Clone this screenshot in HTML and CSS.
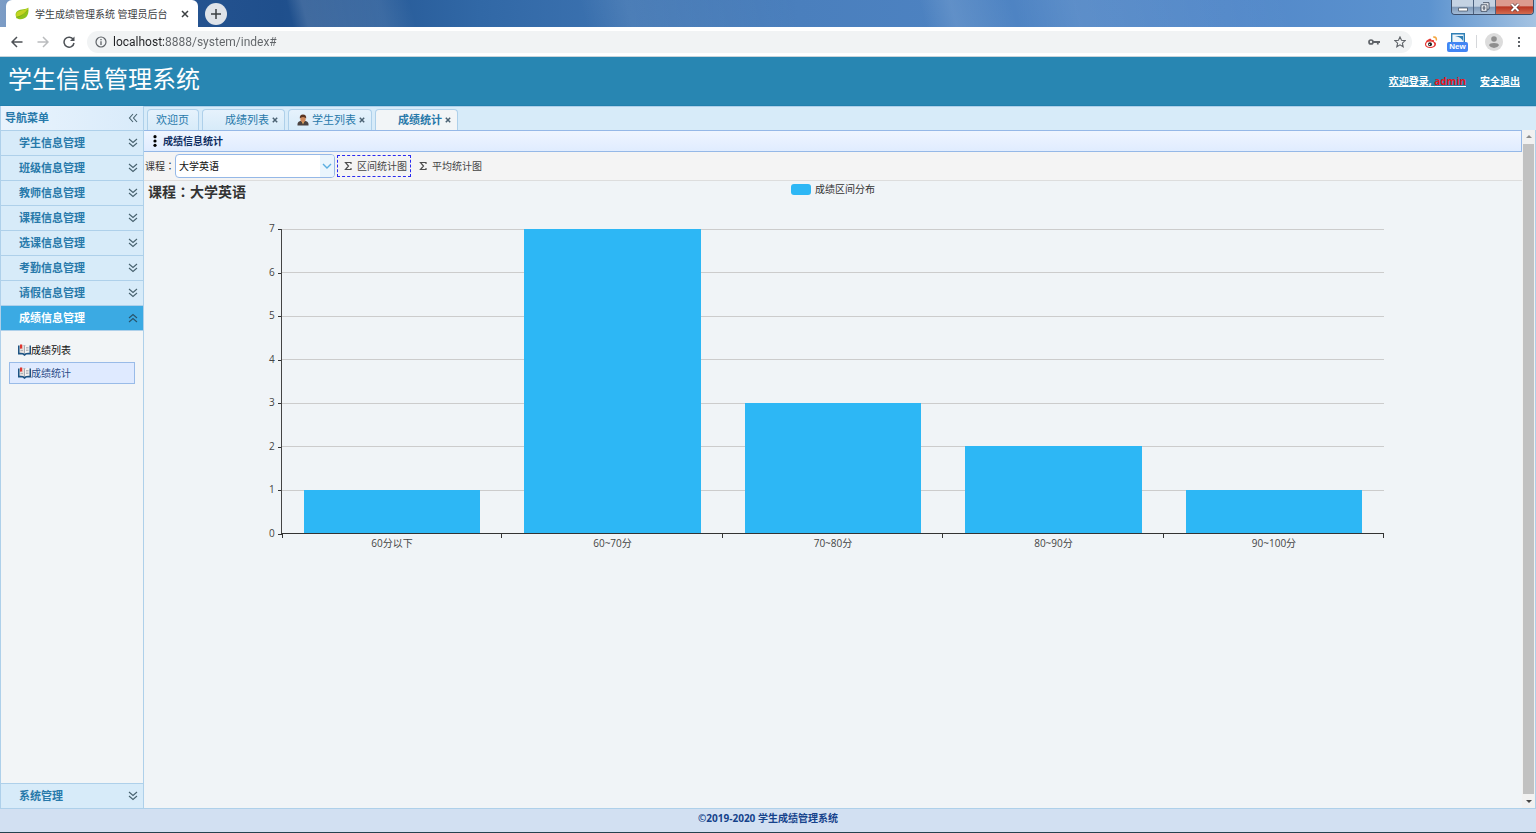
FILE: index.html
```html
<!DOCTYPE html>
<html lang="zh-CN">
<head>
<meta charset="utf-8">
<title>学生成绩管理系统 管理员后台</title>
<link rel="stylesheet" href="styles.css">
</head>
<body>
<svg class="defs" aria-hidden="true">
  <symbol id="i-down" viewBox="0 0 10 10"><path d="M1 1l4 3.500L9 1M1 5l4 3.500L9 5" fill="none" stroke="#47616e" stroke-width="1.100"/></symbol>
  <symbol id="i-up" viewBox="0 0 10 10"><path d="M1 5l4-3.500L9 5M1 9l4-3.500L9 9" fill="none" stroke="#29546b" stroke-width="1.100"/></symbol>
  <symbol id="i-left" viewBox="0 0 10 10"><path d="M5 1L1.500 5 5 9M9 1L5.500 5 9 9" fill="none" stroke="#47616e" stroke-width="1.100"/></symbol>
  <symbol id="i-book" viewBox="0 0 13 12"><path d="M0 1.500h13v9H8.500L6.500 12l-2-1.500H0z" fill="#1d5484"/><path d="M1.500 1Q4.500.5 6.500 1.800V9.600Q4.500 8.500 1.500 8.800z" fill="#e4e0dd"/><path d="M11.500 1Q8.500.5 6.500 1.800V9.600Q8.500 8.500 11.500 8.800z" fill="#f4f2f0"/><path d="M2 .500h2.200V5L3.100 4.200 2 5z" fill="#e0352f"/><path d="M6.500 2v8M8 3.500h2.500M8 5h2.500M8 6.500h2.500M2.500 6.500H5" stroke="#9a9fa8" stroke-width=".7"/></symbol>
  <symbol id="i-x" viewBox="0 0 6 6"><path d="M.8.8l4.400 4.400M5.200.8L.8 5.200" stroke="#4b6273" stroke-width="1.500"/></symbol>
  <symbol id="i-sum" viewBox="0 0 8 10"><path d="M7 3V1.500H1.500L4.500 5 1.500 8.500H7V7" fill="none" stroke="#4c4c4c" stroke-width="1.200"/></symbol>
</svg>

<div class="titlebar">
  <div class="browser-tab">
    <svg class="leaf" viewBox="0 0 14 13"><path d="M13.300.5C11 2.800 6 1.500 2.500 4 0 6 .3 9 1.500 10.800 4 13.200 9 12.600 11.500 9.800 13.500 7.500 13.800 3.500 13.300.5z" fill="#8fc31a"/><path d="M1.500 6C4 3 9 4 13 1 12 6 8 9 1 9.500z" fill="#c3d422"/><path d="M1 11C5 9 9 8 12.500 3" fill="none" stroke="#6d9e13" stroke-width=".6"/></svg>
    <span class="browser-title">学生成绩管理系统 管理员后台</span>
    <button class="plain" aria-label="关闭标签页"><svg width="8" height="8" viewBox="0 0 8 8"><path d="M1 1l6 6M7 1L1 7" stroke="#3c4043" stroke-width="1.500"/></svg></button>
  </div>
  <button class="new-tab" aria-label="新标签页"><svg width="10" height="10" viewBox="0 0 10 10"><path d="M5 0v10M0 5h10" stroke="#3c4043" stroke-width="1.500"/></svg></button>
  <div class="window-buttons">
    <button class="win-btn" aria-label="最小化"><svg width="10" height="9" viewBox="0 0 10 9"><path d="M.5 5h9v3h-9z" fill="#fff" stroke="#4a5568" stroke-width=".8"/></svg></button>
    <button class="win-btn" aria-label="还原"><svg width="10" height="10" viewBox="0 0 10 10"><path d="M3 .7h6v6.500H7.500M1 2.800h6v6.500H1zM3.200 4.800h1.600v2.400H3.200z" fill="#f4f6f8" stroke="#3f4b5e" stroke-width=".9"/></svg></button>
    <button class="win-btn win-close" aria-label="关闭"><svg width="10" height="9" viewBox="0 0 10 9"><path d="M1.500 1l7 7M8.500 1l-7 7" stroke="#5d3030" stroke-width="3.200"/><path d="M1.500 1l7 7M8.500 1l-7 7" stroke="#fff" stroke-width="2"/></svg></button>
  </div>
</div>

<div class="navbar">
  <button class="plain" aria-label="后退"><svg width="12" height="12" viewBox="0 0 12 12"><path d="M11.500 6H1M6 1L1 6l5 5" fill="none" stroke="#4d5156" stroke-width="1.500"/></svg></button>
  <button class="plain" aria-label="前进"><svg width="12" height="12" viewBox="0 0 12 12"><path d="M.5 6H11M6 1l5 5-5 5" fill="none" stroke="#babcbe" stroke-width="1.500"/></svg></button>
  <button class="plain" aria-label="重新加载"><svg width="12" height="12" viewBox="0 0 12 12"><path d="M10.300 3.500A5 5 0 1 0 11 7" fill="none" stroke="#4d5156" stroke-width="1.500"/><path d="M11.500.5V5H7z" fill="#4d5156"/></svg></button>
  <div class="address">
    <svg width="12" height="12" viewBox="0 0 12 12"><circle cx="6" cy="6" r="5" fill="none" stroke="#5f6368" stroke-width="1.200"/><path d="M6 5.300V9M6 3v1.300" stroke="#5f6368" stroke-width="1.300"/></svg>
    <input class="url" type="text" aria-label="地址" value="localhost:8888/system/index#">
    <svg width="12" height="8" viewBox="0 0 12 8"><circle cx="3" cy="4" r="2" fill="none" stroke="#5f6368" stroke-width="1.700"/><path d="M5 4h7M9.800 4v2.500" stroke="#5f6368" stroke-width="1.800"/></svg>
    <svg class="star" width="12" height="12" viewBox="0 0 12 12"><path d="M6 .9l1.500 3.400 3.700.3-2.800 2.500.8 3.700L6 8.900l-3.200 1.900.8-3.700L.8 4.600l3.700-.3z" fill="none" stroke="#5f6368" stroke-width="1.100"/></svg>
  </div>
  <svg width="14" height="14" viewBox="0 0 14 14"><path d="M5.500 3.800Q2 5 1 8.500C.5 12 4 13 6 13c3.500 0 6-1.600 6-4 0-1.300-1-2-2-2.200.5-1.800-.8-2.300-2.500-1.500 0-1.200-.5-1.800-2-1.500z" fill="#e53935"/><ellipse cx="6.200" cy="9.200" rx="4" ry="2.700" fill="#fff"/><circle cx="6" cy="9.200" r="2" fill="#222"/><circle cx="5.400" cy="9.600" r=".7" fill="#fff"/><path d="M9 1.500c3-.8 4.800 1.500 4 4.200L11.500 5.200C12 3.500 11 2.700 9.500 3z" fill="#f5a742"/></svg>
  <div class="extension"><svg width="14" height="9" viewBox="0 0 14 9"><path d="M.7 9V.7h12.600V9" fill="#eef5fa" stroke="#2f7fb5" stroke-width="1.400"/><path d="M4 3h8v5Q10 4 4 3z" fill="#2f7fb5"/></svg><span class="new-badge">New</span></div>
  <span class="divider"></span>
  <svg class="avatar" width="18" height="18" viewBox="0 0 18 18"><circle cx="9" cy="9" r="9" fill="#dcdcdc"/><circle cx="9" cy="6" r="2.800" fill="#8f8f8f"/><path d="M4 12.300Q4.500 10 9 10t5 2.300Q12.500 15 9 15t-5-2.700z" fill="#8f8f8f"/></svg>
  <button class="plain" aria-label="菜单"><svg width="4" height="12" viewBox="0 0 4 12"><path d="M1 1h2v2H1zM1 5h2v2H1zM1 9h2v2H1z" fill="#5f6368"/></svg></button>
</div>

<header class="app-header">
  <h1>学生信息管理系统</h1>
  <div class="account"><u>欢迎登录, <span class="user">admin</span></u><a href="#">安全退出</a></div>
</header>

<div class="main">
  <nav class="sidebar">
    <div class="side-title"><span>导航菜单</span><svg class="ico"><use href="#i-left"/></svg></div>
    <button class="group">学生信息管理<svg class="ico"><use href="#i-down"/></svg></button>
    <button class="group">班级信息管理<svg class="ico"><use href="#i-down"/></svg></button>
    <button class="group">教师信息管理<svg class="ico"><use href="#i-down"/></svg></button>
    <button class="group">课程信息管理<svg class="ico"><use href="#i-down"/></svg></button>
    <button class="group">选课信息管理<svg class="ico"><use href="#i-down"/></svg></button>
    <button class="group">考勤信息管理<svg class="ico"><use href="#i-down"/></svg></button>
    <button class="group">请假信息管理<svg class="ico"><use href="#i-down"/></svg></button>
    <button class="group open">成绩信息管理<svg class="ico"><use href="#i-up"/></svg></button>
    <div class="submenu">
      <a href="#"><svg class="book"><use href="#i-book"/></svg>成绩列表</a>
      <a href="#" class="current"><svg class="book"><use href="#i-book"/></svg>成绩统计</a>
    </div>
    <button class="group last">系统管理<svg class="ico"><use href="#i-down"/></svg></button>
  </nav>

  <main class="content">
    <div class="tabs">
      <div class="tab"><a href="#">欢迎页</a></div>
      <div class="tab indent"><a href="#">成绩列表</a><button class="plain" aria-label="关闭"><svg class="x"><use href="#i-x"/></svg></button></div>
      <div class="tab"><svg width="12" height="12" viewBox="0 0 12 12"><path d="M.5 11.500Q0 7.500 3.500 7h5q3.500.5 3 4.500z" fill="#4a4240"/><path d="M4.500 7h3L6 10.500z" fill="#f0b060"/><ellipse cx="6" cy="5" rx="2.700" ry="3" fill="#d08a5c"/><path d="M2.800 4.500Q2.500.4 6 .4t3.200 4.100Q8 3 6 3T2.800 4.500z" fill="#5a3524"/></svg><a href="#">学生列表</a><button class="plain" aria-label="关闭"><svg class="x"><use href="#i-x"/></svg></button></div>
      <div class="tab indent selected"><a href="#">成绩统计</a><button class="plain" aria-label="关闭"><svg class="x"><use href="#i-x"/></svg></button></div>
    </div>
    <div class="panel-row">
      <section class="panel">
        <h2 class="panel-title"><svg width="4" height="12" viewBox="0 0 4 12"><circle cx="2" cy="1.700" r="1.600"/><circle cx="2" cy="6" r="1.600"/><circle cx="2" cy="10.300" r="1.600"/></svg>成绩信息统计</h2>
        <div class="toolbar">
          <label for="course">课程：</label>
          <div class="combo"><select id="course"><option>大学英语</option></select><svg class="combo-arrow" viewBox="0 0 14 22"><path d="M3 9l4 4 4-4" fill="none" stroke="#5aaee0" stroke-width="1.400"/></svg></div>
          <button class="tool focused"><svg class="sum"><use href="#i-sum"/></svg>区间统计图</button>
          <button class="tool"><svg class="sum"><use href="#i-sum"/></svg>平均统计图</button>
        </div>
        <div class="chart">
          <div class="chart-head">
            <h3>课程：大学英语</h3>
            <div class="legend"><span class="swatch"></span>成绩区间分布</div>
          </div>
          <div class="plot">
            <div class="y-axis"><span>7</span><span>6</span><span>5</span><span>4</span><span>3</span><span>2</span><span>1</span><span>0</span></div>
            <div class="area">
              <div class="lines"><i></i><i></i><i></i><i></i><i></i><i></i><i></i></div>
              <div class="bars">
                <div class="bar" style="height:14.286%"></div>
                <div class="bar" style="height:100%"></div>
                <div class="bar" style="height:42.857%"></div>
                <div class="bar" style="height:28.571%"></div>
                <div class="bar" style="height:14.286%"></div>
              </div>
            </div>
          </div>
          <div class="x-axis"><span>60分以下</span><span>60~70分</span><span>70~80分</span><span>80~90分</span><span>90~100分</span></div>
        </div>
      </section>
      <div class="scrollbar"><svg width="8" height="5" viewBox="0 0 8 5"><path d="M1 4l3-3 3 3z" fill="#8c8c8c"/></svg><span class="thumb"></span><svg width="8" height="5" viewBox="0 0 8 5"><path d="M1 1l3 3 3-3z" fill="#444"/></svg></div>
    </div>
  </main>
</div>
<footer class="footer">©2019-2020 学生成绩管理系统</footer>
</body>
</html>
```
FILE: styles.css
```css
* { box-sizing: border-box; }
body {
  margin: 0;
  height: 100vh;
  display: flex;
  flex-direction: column;
  overflow: hidden;
  font: 10px/14px "Open Sans", "Noto Sans CJK SC", sans-serif;
  color: #222;
  background: #f0f4f7;
}
svg { display: block; flex: none; }
button, input, select { font: inherit; color: inherit; margin: 0; }
.defs { position: absolute; width: 0; height: 0; }
.plain { display: flex; padding: 0; border: 0; background: none; }

/* browser window */
.titlebar {
  flex: none;
  display: flex;
  height: 27px;
  padding-left: 6px;
  background:
    linear-gradient(75deg, transparent 19%, #ffffff24 20%, #ffffff18 25%, transparent 27%, transparent 38%, #ffffff14 41%, transparent 52%, transparent 60%, #ffffff1c 62%, transparent 66%, #ffffff14 70%, transparent 84%),
    linear-gradient(90deg, #7d9dc6 0, #24528f 200px, #1f4f8c 280px, #3168a6 480px, #4a7fbd 52%, #5288c9 80%, #5c93cf 93%, #a5c3e2 100%);
}
.browser-tab {
  display: flex;
  align-items: center;
  width: 192px;
  padding: 0 9px;
  background: #fff;
  border-radius: 6px 6px 0 0;
}
.leaf { width: 14px; height: 13px; margin-right: 6px; }
.browser-title { flex: 1; white-space: nowrap; color: #3c4043; }
.new-tab {
  display: flex;
  align-items: center;
  justify-content: center;
  width: 22px;
  height: 22px;
  margin: 3px 0 0 7px;
  padding: 0;
  border: 0;
  border-radius: 50%;
  background: #dfe3e9;
}
.window-buttons {
  display: flex;
  height: 15px;
  margin: 0 2px 0 auto;
  border: 1px solid #3d4f6c;
  border-top: 0;
  border-radius: 0 0 4px 4px;
  overflow: hidden;
}
.win-btn {
  display: flex;
  align-items: center;
  justify-content: center;
  width: 22px;
  padding: 0;
  border: 0;
  border-right: 1px solid #4d6280;
  background: linear-gradient(#c4d2e3 45%, #8099b8 50%, #a3bbd6);
}
.win-close { width: 37px; border: 0; background: linear-gradient(#dc9a8e 40%, #b93623 50%, #d36c50); }
.navbar {
  flex: none;
  display: flex;
  align-items: center;
  gap: 14px;
  height: 30px;
  padding: 0 15px 0 11px;
  background: #fff;
  border-bottom: 1px solid #c8d4da;
}
.address {
  flex: 1;
  display: flex;
  align-items: center;
  height: 22px;
  margin-left: -2px;
  padding: 0 6px 0 8px;
  border-radius: 11px;
  background: #f1f3f4;
}
.url {
  flex: 1;
  height: 18px;
  margin-left: 6px;
  padding: 0;
  border: 0;
  outline: 0;
  font-family: Roboto, sans-serif;
  font-size: 12px;
  line-height: 18px;
  color: transparent;
  background: linear-gradient(90deg, #202124 52px, #606468 52px);
  background-clip: text;
}
.star { margin-left: 14px; }
.address + svg { margin-left: -2px; }
.extension { display: flex; flex-direction: column; align-items: center; width: 21px; margin: 2px -6px 0 -5px; }
.new-badge {
  padding: 0 2px;
  border-radius: 2px;
  background: #4285f4;
  color: #fff;
  font: bold 8px/10px "Liberation Sans", sans-serif;
}
.divider { width: 1px; height: 13px; background: #d5d7da; }
.avatar { margin-left: -6px; }

/* application header */
.app-header {
  flex: none;
  display: flex;
  align-items: center;
  justify-content: space-between;
  height: 49px;
  padding: 0 16px 4px 8px;
  background: #2886b2;
  border-bottom: 1px solid #2380ad;
  color: #fff;
}
h1 { margin: 0; font-size: 24px; line-height: 32px; font-weight: 400; }
.account { display: flex; gap: 14px; padding-top: 4px; font-weight: bold; }
.account a { color: #fff; }
.user { color: #e8141c; }

/* navigation */
.main { flex: 1; display: flex; min-height: 0; }
.sidebar {
  flex: none;
  display: flex;
  flex-direction: column;
  width: 144px;
  border: 1px solid #aed0ea;
  border-width: 0 1px;
  background: #f2f5f7;
}
.side-title, .group {
  display: flex;
  align-items: center;
  justify-content: space-between;
  height: 25px;
  padding: 0 5px 0 18px;
  border: 0;
  border-bottom: 1px solid #aed0ea;
  background: #d7ebf9;
  color: #2779aa;
  font-size: 11px;
  line-height: 16px;
  font-weight: bold;
}
.side-title { padding-left: 4px; background: linear-gradient(90deg, #e9f3fd, #d9ebfa); }
.group.open { background: #3baae3; color: #fff; }
.group.last { border-top: 1px solid #aed0ea; border-bottom: 0; }
.ico { width: 10px; height: 10px; }
.submenu { flex: 1; padding: 8px; }
.submenu a {
  display: flex;
  align-items: center;
  height: 22px;
  padding-left: 8px;
  border: 1px solid transparent;
  color: #111;
  text-decoration: none;
}
.submenu a + a { margin-top: 1px; }
.submenu a.current { border-color: #99bbe8; background: #dfeaff; color: #2a4a86; }
.book { width: 13px; height: 12px; }

/* tab strip */
.content { flex: 1; display: flex; flex-direction: column; min-width: 0; }
.tabs {
  flex: none;
  display: flex;
  gap: 3px;
  height: 24px;
  padding: 2px 0 0 3px;
  background: #d7ebf9;
  border-top: 1px solid #aed0ea;
}
.tab {
  display: flex;
  align-items: center;
  gap: 3px;
  height: 21px;
  padding: 0 6px 0 8px;
  border: 1px solid #aed0ea;
  border-bottom: 0;
  border-radius: 4px 4px 0 0;
  background: linear-gradient(#e6f2fc, #d7ebf9);
  font-size: 11px;
  line-height: 16px;
}
.tab:first-child { padding-right: 9px; }
.tab a { color: #2779aa; text-decoration: none; }
.tab.indent { padding-left: 22px; }
.tab.selected { background: #f2f5f7; font-weight: bold; }
.x { width: 6px; height: 6px; }

/* statistics panel */
.panel-row { flex: 1; display: flex; min-height: 0; }
.panel { flex: 1; min-width: 0; background: #f0f4f7; }
.panel-title {
  display: flex;
  align-items: center;
  gap: 6px;
  height: 22px;
  margin: 0;
  padding-left: 9px;
  border: 1px solid #95b8e7;
  border-left-width: 0;
  background: linear-gradient(#eff5ff, #e0ecff);
  color: #0e2d5f;
  font-size: 10px;
}
.toolbar {
  display: flex;
  align-items: center;
  height: 29px;
  padding-left: 1px;
  background: #f4f4f4;
  border-bottom: 1px solid #ddd;
}
.toolbar label { color: #333; }
.toolbar label, .chart-head h3 {
  font-family: "Open Sans", "Noto Sans CJK JP", sans-serif;
  font-feature-settings: "locl" 0;
}
.combo { position: relative; width: 160px; height: 24px; }
.combo select {
  appearance: none;
  width: 100%;
  height: 100%;
  padding: 0 3px;
  border: 1px solid #95b8e7;
  border-radius: 4px;
  background: #fff;
  color: #111;
}
.combo-arrow {
  position: absolute;
  top: 1px;
  right: 1px;
  width: 14px;
  height: 22px;
  background: #eaf5fd;
  border-radius: 0 3px 3px 0;
}
.tool {
  display: flex;
  align-items: center;
  gap: 5px;
  height: 22px;
  padding: 0 3px 0 6px;
  border: 1px solid transparent;
  background: none;
  color: #444;
}
.tool.focused { margin: 0 1px 0 2px; border: 1px dashed #2b2bf0; }
.sum { width: 8px; height: 10px; }

/* bar chart */
.chart-head { position: relative; display: flex; justify-content: center; height: 48px; padding-top: 1px; }
.chart-head h3 { position: absolute; left: 4px; top: 0; margin: 0; font-size: 14px; line-height: 21px; color: #333; }
.legend { display: flex; align-items: center; gap: 4px; height: 14px; color: #333; }
.swatch { width: 20px; height: 11px; border-radius: 3px; background: #2db7f5; }
.plot { display: flex; height: 305px; padding-right: 10%; }
.y-axis {
  display: flex;
  flex-direction: column;
  justify-content: space-between;
  width: 11.111%;
  margin: -8px -1px -6px 0;
  color: #444;
  text-align: right;
}
.y-axis span {
  padding-right: 7px;
  background: linear-gradient(#333, #333) right 8px / 4px 1px no-repeat;
}
.area { flex: 1; position: relative; border-left: 1px solid #444; border-bottom: 1px solid #333; }
.lines { height: 100%; display: grid; grid-template-rows: repeat(7, 1fr); }
.lines i { border-top: 1px solid #ccc; }
.bars {
  position: absolute;
  inset: 0;
  display: grid;
  grid-template-columns: repeat(5, 1fr);
  align-items: end;
  justify-items: center;
}
.bar { width: 80%; background: #2db7f5; }
.x-axis {
  display: grid;
  grid-template-columns: repeat(5, 1fr);
  margin: 0 10%;
  color: #444;
  text-align: center;
}
.x-axis span {
  padding-top: 2px;
  background: linear-gradient(#333, #333) right 0 / 1px 4px no-repeat;
}
.x-axis span:first-child {
  background: linear-gradient(#333, #333) right 0 / 1px 4px no-repeat, linear-gradient(#333, #333) left 0 / 1px 4px no-repeat;
}

.scrollbar {
  display: flex;
  flex-direction: column;
  align-items: center;
  gap: 5px;
  width: 14px;
  padding: 4px 0;
  border-right: 1px solid #aed0ea;
  background: #f1f1f1;
}
.thumb { flex: 1; width: 11px; background: #c1c1c1; }
.footer {
  flex: none;
  height: 25px;
  padding-top: 2px;
  border-top: 1px solid #aed0ea;
  border-bottom: 1px solid #24424f;
  background: #d2e0f2;
  color: #15428b;
  font-weight: bold;
  text-align: center;
}
```
